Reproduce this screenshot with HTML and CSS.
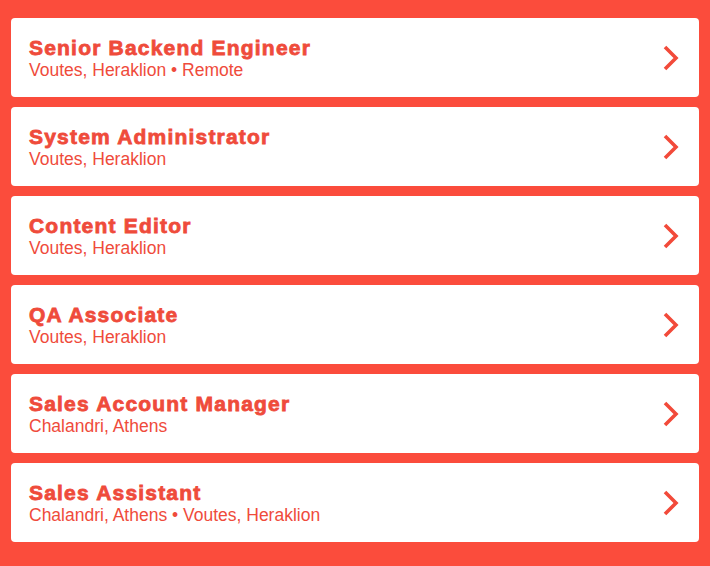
FILE: index.html
```html
<!DOCTYPE html>
<html lang="en">
<head>
	<meta charset="UTF-8">
	<title>Jobs</title>
	<link rel="stylesheet" href="styles.css">
</head>
<body>
	<ul class="jobs">
		<li class="job">
			<div class="job-text">
				<h2>Senior Backend Engineer</h2>
				<p>Voutes, Heraklion &bull; Remote</p>
			</div>
			<svg class="arrow" width="18" height="26" viewBox="0 0 18 26"><path d="M3 2 L14 13 L3 24" fill="none" stroke="currentColor" stroke-width="3.6"/></svg>
		</li>
		<li class="job">
			<div class="job-text">
				<h2>System Administrator</h2>
				<p>Voutes, Heraklion</p>
			</div>
			<svg class="arrow" width="18" height="26" viewBox="0 0 18 26"><path d="M3 2 L14 13 L3 24" fill="none" stroke="currentColor" stroke-width="3.6"/></svg>
		</li>
		<li class="job">
			<div class="job-text">
				<h2>Content Editor</h2>
				<p>Voutes, Heraklion</p>
			</div>
			<svg class="arrow" width="18" height="26" viewBox="0 0 18 26"><path d="M3 2 L14 13 L3 24" fill="none" stroke="currentColor" stroke-width="3.6"/></svg>
		</li>
		<li class="job">
			<div class="job-text">
				<h2>QA Associate</h2>
				<p>Voutes, Heraklion</p>
			</div>
			<svg class="arrow" width="18" height="26" viewBox="0 0 18 26"><path d="M3 2 L14 13 L3 24" fill="none" stroke="currentColor" stroke-width="3.6"/></svg>
		</li>
		<li class="job">
			<div class="job-text">
				<h2>Sales Account Manager</h2>
				<p>Chalandri, Athens</p>
			</div>
			<svg class="arrow" width="18" height="26" viewBox="0 0 18 26"><path d="M3 2 L14 13 L3 24" fill="none" stroke="currentColor" stroke-width="3.6"/></svg>
		</li>
		<li class="job">
			<div class="job-text">
				<h2>Sales Assistant</h2>
				<p>Chalandri, Athens &bull; Voutes, Heraklion</p>
			</div>
			<svg class="arrow" width="18" height="26" viewBox="0 0 18 26"><path d="M3 2 L14 13 L3 24" fill="none" stroke="currentColor" stroke-width="3.6"/></svg>
		</li>
	</ul>
</body>
</html>
```

FILE: styles.css
```css
*{margin: 0;padding: 0;}
body{
	background: #fb4c3c;
	font-family: "Liberation Sans", Arial, sans-serif;
}
.jobs{
	list-style: none;
	padding: 18px 11px;
	display: flex;
	flex-direction: column;
	gap: 10px;
}
.job{
	background: #fff;
	border-radius: 4px;
	height: 79px;
	box-sizing: border-box;
	padding: 0 19px 0 18px;
	display: flex;
	align-items: center;
	justify-content: space-between;
	color: #ef4b3b;
	cursor: pointer;
}
.job-text{
	padding-top: 2px;
}
.job h2{
	font-size: 21px;
	font-weight: bold;
	line-height: 23px;
	letter-spacing: 1.2px;
	-webkit-text-stroke: 0.8px #ef4b3b;
}
.job p{
	font-size: 17.5px;
	line-height: 22px;
}
.arrow{
	color: #f24a3a;
}
```
